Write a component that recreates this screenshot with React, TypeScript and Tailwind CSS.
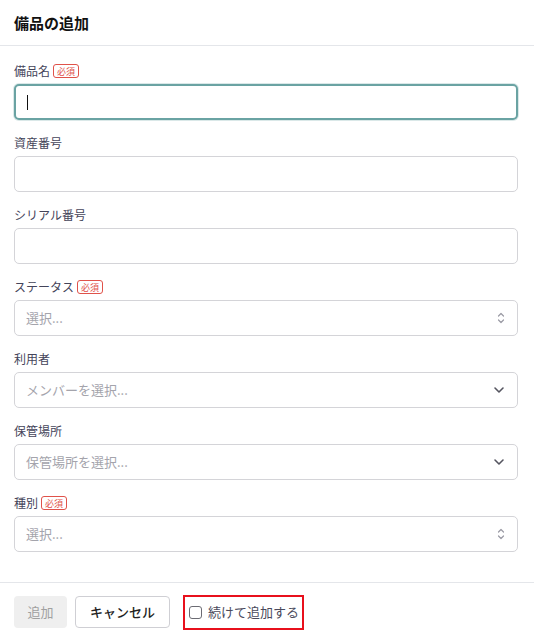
import React from "react";

const font = { fontFamily: '"Noto Sans CJK JP", "Noto Sans", sans-serif' };

function Req() {
  return (
    <span className="ml-[3px] inline-flex h-[14px] items-center rounded-[3px] border border-[#e0524a] px-[3px] text-[9px] leading-none text-[#e0524a]">
      必須
    </span>
  );
}

function Label({ text, req }: { text: string; req?: boolean }) {
  return (
    <div className="flex h-[16px] items-center text-[12px] text-[#44445a]">
      <span>{text}</span>
      {req && <Req />}
    </div>
  );
}

function Updown() {
  return (
    <svg width="8" height="12" viewBox="0 0 8 12" fill="none" stroke="#9a9aa4" strokeWidth="1.2" strokeLinecap="round" strokeLinejoin="round">
      <path d="M1.5 4 L4 1.5 L6.5 4" />
      <path d="M1.5 8 L4 10.5 L6.5 8" />
    </svg>
  );
}

function Chevron() {
  return (
    <svg width="12" height="8" viewBox="0 0 12 8" fill="none" stroke="#555560" strokeWidth="1.6" strokeLinecap="round" strokeLinejoin="round">
      <path d="M2 2 L6 6 L10 2" />
    </svg>
  );
}

function Select({ placeholder, icon }: { placeholder: string; icon: "updown" | "chevron" }) {
  return (
    <div className="mt-[5px] flex h-[36px] items-center justify-between rounded-[5px] border border-[#d4d4d8] bg-white pl-[11px] pr-[12px]">
      <span className="text-[13px] text-[#a4a4ac]">{placeholder}</span>
      {icon === "updown" ? <Updown /> : <Chevron />}
    </div>
  );
}

function TextInput() {
  return <div className="mt-[5px] h-[36px] rounded-[5px] border border-[#d4d4d8] bg-white" />;
}

export default function App() {
  return (
    <div className="flex h-[643px] w-[534px] flex-col bg-white" style={font}>
      <div className="flex h-[46px] items-center border-b border-[#e4e6ea] px-[14px] pt-[2px]">
        <h1 className="text-[15px] font-bold text-[#111]">備品の追加</h1>
      </div>
      <div className="flex flex-1 flex-col gap-[15px] pl-[14px] pr-[16px] pt-[17px]">
        <div>
          <Label text="備品名" req />
          <div className="mt-[5px] flex h-[36px] items-center rounded-[5px] border-2 border-[#6aa3a3] bg-white pl-[11px] shadow-[0_0_0_1px_rgba(106,163,163,0.25)]">
            <div className="h-[15px] w-[1px] bg-[#111]" />
          </div>
        </div>
        <div>
          <Label text="資産番号" />
          <TextInput />
        </div>
        <div>
          <Label text="シリアル番号" />
          <TextInput />
        </div>
        <div>
          <Label text="ステータス" req />
          <Select placeholder="選択..." icon="updown" />
        </div>
        <div>
          <Label text="利用者" />
          <Select placeholder="メンバーを選択..." icon="chevron" />
        </div>
        <div>
          <Label text="保管場所" />
          <Select placeholder="保管場所を選択..." icon="chevron" />
        </div>
        <div>
          <Label text="種別" req />
          <Select placeholder="選択..." icon="updown" />
        </div>
      </div>
      <div className="flex h-[61px] items-center gap-[8px] border-t border-[#e4e6ea] px-[14px] pb-[2px]">
        <button className="h-[32px] w-[53px] rounded-[4px] bg-[#efefef] text-[13px] text-[#a0a0a0]">追加</button>
        <button className="h-[32px] w-[95px] rounded-[4px] border border-[#cfcfd4] bg-white text-[13px] font-medium text-[#222]">キャンセル</button>
        <div className="ml-[5px] flex h-[35px] w-[121px] items-center gap-[6px] border-2 border-[#e8101c] pl-[4px]">
          <div className="h-[13px] w-[13px] rounded-[3px] border-[1.5px] border-[#6b6b73]" />
          <span className="text-[13px] text-[#4a4a5c]">続けて追加する</span>
        </div>
      </div>
    </div>
  );
}
